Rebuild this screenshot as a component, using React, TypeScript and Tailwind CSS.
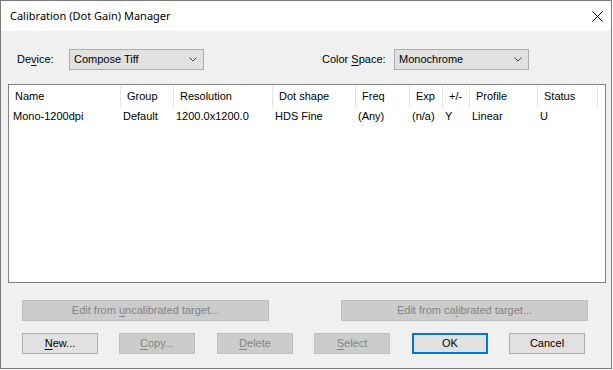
const font = "font-['Liberation_Sans',Arial,sans-serif]";

type Col = { label: string; value: string; w: number };

const columns: Col[] = [
  { label: 'Name', value: 'Mono-1200dpi', w: 112 },
  { label: 'Group', value: 'Default', w: 53 },
  { label: 'Resolution', value: '1200.0x1200.0', w: 99 },
  { label: 'Dot shape', value: 'HDS Fine', w: 83 },
  { label: 'Freq', value: '(Any)', w: 54 },
  { label: 'Exp', value: '(n/a)', w: 33 },
  { label: '+/-', value: 'Y', w: 27 },
  { label: 'Profile', value: 'Linear', w: 68 },
  { label: 'Status', value: 'U', w: 60 },
];

function Chevron() {
  return (
    <svg width="8" height="5" viewBox="0 0 8 5" className="shrink-0">
      <polyline points="0.5,0.5 4,4 7.5,0.5" fill="none" stroke="#444" strokeWidth="1" />
    </svg>
  );
}

function Combo({ value }: { value: string }) {
  return (
    <div className="w-[135px] h-[21px] bg-[#e1e1e1] border border-[#adadad] flex items-center justify-between pl-[4px] pr-[6px] text-[11px] text-black">
      <span>{value}</span>
      <Chevron />
    </div>
  );
}

function Button({
  children,
  width = 'w-[76px]',
  disabled = false,
  primary = false,
}: {
  children: React.ReactNode;
  width?: string;
  disabled?: boolean;
  primary?: boolean;
}) {
  let cls = 'bg-[#e1e1e1] border border-[#adadad] text-black';
  if (disabled) cls = 'bg-[#cccccc] border border-[#bfbfbf] text-[#838383]';
  if (primary) cls = 'bg-[#e1e1e1] border-2 border-[#0078d7] text-black';
  return (
    <div className={`${width} h-[21px] shrink-0 flex items-center justify-center text-[11px] ${cls}`}>
      <span>{children}</span>
    </div>
  );
}

export default function App() {
  return (
    <div className={`w-[613px] h-[370px] bg-white ${font}`}>
      <div className="w-[612px] h-[369px] border border-[#7a7a7a] flex flex-col">
        {/* title bar */}
        <div className="h-[30px] shrink-0 bg-white flex items-center justify-between pl-[9px] pr-[8px]">
          <span className="text-[11px] text-black font-['Noto_Sans',sans-serif]">Calibration (Dot Gain) Manager</span>
          <svg width="11" height="11" viewBox="0 0 11 11">
            <path d="M0.5 0.5 L10.5 10.5 M10.5 0.5 L0.5 10.5" stroke="#000" strokeWidth="1" fill="none" />
          </svg>
        </div>

        <div className="flex-1 bg-[#f0f0f0] flex flex-col text-[11px] text-black">
          {/* device / color space */}
          <div className="mt-[18px] h-[21px] flex items-center">
            <span className="w-[52px] ml-[16px]">
              De<u className="underline-offset-2">v</u>ice:
            </span>
            <Combo value="Compose Tiff" />
            <span className="w-[72px] ml-[118px]">
              Color <u className="underline-offset-2">S</u>pace:
            </span>
            <Combo value="Monochrome" />
          </div>

          {/* list view */}
          <div className="mt-[14px] ml-[7px] w-[598px] h-[199px] shrink-0 bg-white border border-[#828282] flex flex-col">
            <div className="h-[23px] flex">
              {columns.map((c) => (
                <div
                  key={c.label}
                  className="h-full flex items-center pl-[6px] border-r border-[#e5e5e5] shrink-0"
                  style={{ width: c.w }}
                >
                  {c.label}
                </div>
              ))}
            </div>
            <div className="h-[17px] flex">
              {columns.map((c, i) => (
                <div
                  key={c.label}
                  className={`h-full flex items-center shrink-0 ${i === 0 ? 'pl-[4px]' : 'pl-[2px]'}`}
                  style={{ width: c.w }}
                >
                  {c.value}
                </div>
              ))}
            </div>
          </div>

          {/* edit buttons */}
          <div className="mt-[17px] ml-[21px] flex gap-[72px]">
            <Button width="w-[247px]" disabled>
              Edit from <u className="underline-offset-2">u</u>ncalibrated target...
            </Button>
            <Button width="w-[247px]" disabled>
              Edit from ca<u className="underline-offset-2">l</u>ibrated target...
            </Button>
          </div>

          {/* bottom buttons */}
          <div className="mt-[12px] ml-[21px] flex">
            <Button>
              <u className="underline-offset-2">N</u>ew...
            </Button>
            <div className="ml-[21px]">
              <Button disabled>
                <u className="underline-offset-2">C</u>opy...
              </Button>
            </div>
            <div className="ml-[22px]">
              <Button disabled>
                <u className="underline-offset-2">D</u>elete
              </Button>
            </div>
            <div className="ml-[21px]">
              <Button disabled>
                <u className="underline-offset-2">S</u>elect
              </Button>
            </div>
            <div className="ml-[22px]">
              <Button primary>OK</Button>
            </div>
            <div className="ml-[21px]">
              <Button>Cancel</Button>
            </div>
          </div>
        </div>
      </div>
    </div>
  );
}
